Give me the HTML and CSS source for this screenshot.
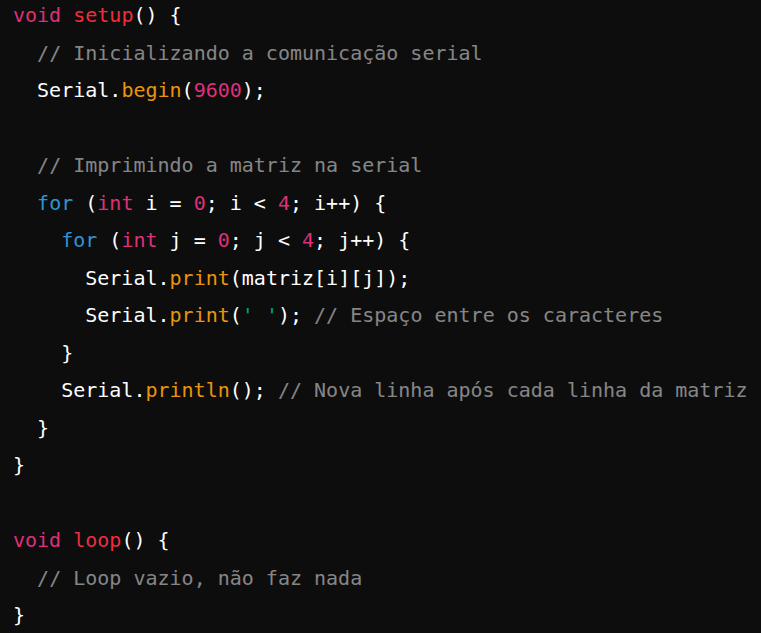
FILE: index.html
```html
<!DOCTYPE html>
<html lang="pt">
<head>
<meta charset="utf-8">
<title>Código</title>
<link rel="stylesheet" href="styles.css">
</head>
<body>
<pre class="code"><code><span class="t">void</span> <span class="f">setup</span>() {
  <span class="c">// Inicializando a comunicação serial</span>
  Serial.<span class="b">begin</span>(<span class="n">9600</span>);

  <span class="c">// Imprimindo a matriz na serial</span>
  <span class="k">for</span> (<span class="t">int</span> i = <span class="n">0</span>; i &lt; <span class="n">4</span>; i++) {
    <span class="k">for</span> (<span class="t">int</span> j = <span class="n">0</span>; j &lt; <span class="n">4</span>; j++) {
      Serial.<span class="b">print</span>(matriz[i][j]);
      Serial.<span class="b">print</span>(<span class="s">' '</span>); <span class="c">// Espaço entre os caracteres</span>
    }
    Serial.<span class="b">println</span>(); <span class="c">// Nova linha após cada linha da matriz</span>
  }
}

<span class="t">void</span> <span class="f">loop</span>() {
  <span class="c">// Loop vazio, não faz nada</span>
}</code></pre>
</body>
</html>
```
FILE: styles.css
```css
html, body {
  margin: 0;
  padding: 0;
  background: #0d0d0d;
  overflow: hidden;
}
.code {
  margin: -3px 0 0;
  padding: 0 0 0 13px;
  font-family: "DejaVu Sans Mono", "Liberation Mono", monospace;
  font-size: 20px;
  line-height: 37.5px;
  color: #ffffff;
  white-space: pre;
}
.t { color: #df3079; }
.f { color: #f22c3d; }
.b { color: #e9950c; }
.n { color: #df3079; }
.k { color: #2e95d3; }
.s { color: #00a67d; }
.c { color: rgba(255, 255, 255, 0.5); }
```
